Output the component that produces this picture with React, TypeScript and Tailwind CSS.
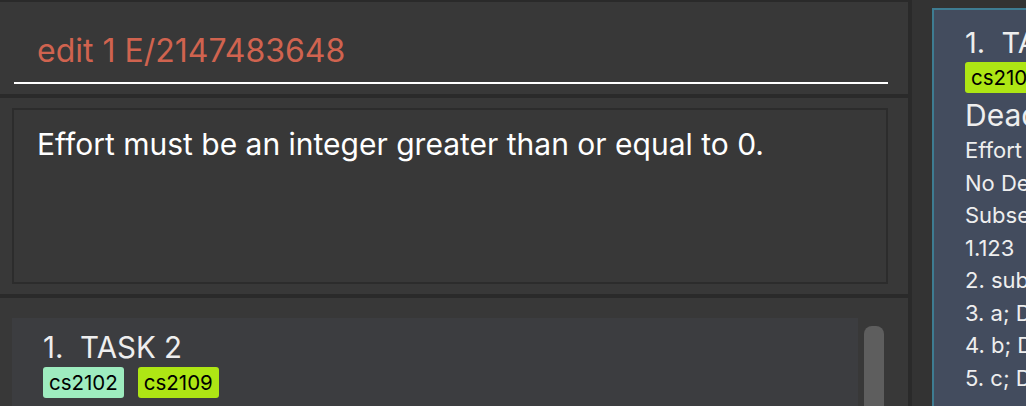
const font = { fontFamily: 'Inter, "Noto Sans", sans-serif' };

const Tag = ({ label, color }: { label: string; color: string }) => (
  <span className={`${color} text-black text-[20.5px] leading-[31px] px-[6px] rounded-[3px]`}>{label}</span>
);

const App = () => {
  const subtasks = ['1.123', '2. sub', '3. a; D', '4. b; D', '5. c; D'];

  return (
    <div className="w-[1026px] h-[406px] bg-[#2a2a2a] flex overflow-hidden" style={font}>
      {/* left column */}
      <div className="w-[908px] shrink-0 flex flex-col gap-[4px] pt-[2px]">
        <div className="h-[92px] bg-[#383838] pl-[14px] pr-[20px] flex flex-col justify-end pb-[10px]">
          <div className="text-[#d0634f] text-[32px] leading-[38px] pl-[23px] pb-[12px]">edit 1 E/2147483648</div>
          <div className="h-[2px] bg-white" />
        </div>
        <div className="h-[196px] bg-[#383838] p-[10px] pl-[12px] pr-[20px]">
          <div className="h-full border-2 border-[#2c2c2c] pl-[23px] pt-[14px] text-white text-[30px] leading-[40px]">
            Effort must be an integer greater than or equal to 0.
          </div>
        </div>
        <div className="flex-1 bg-[#383838] pl-[12px] pt-[20px] flex gap-[6px]">
          <div className="w-[846px] bg-[#3c3d40] pl-[31px] pt-[10px]">
            <div className="text-[#eeeeee] text-[29.5px] leading-[38px]">1.&nbsp; TASK 2</div>
            <div className="flex gap-[14px] mt-[1px]">
              <Tag label="cs2102" color="bg-[#9eecbf]" />
              <Tag label="cs2109" color="bg-[#aee614]" />
            </div>
          </div>
          <div className="w-[20px] mt-[8px] bg-[#5e5e5e] rounded-t-[8px]" />
        </div>
      </div>
      {/* right column */}
      <div className="flex-1 min-w-0 ml-[4px] bg-[#333333] pl-[20px] pt-[8px]">
        <div className="h-[420px] border-2 border-r-0 border-[#3e7c92] bg-[#434c5e] pl-[31px] pt-[16px] text-[#eeeeee] whitespace-nowrap overflow-hidden">
          <div className="text-[29px] leading-[34px]">1.&nbsp; TASK 2</div>
          <div className="mt-[2px] flex">
            <Tag label="cs2109" color="bg-[#aee614]" />
          </div>
          <div className="text-[30px] leading-[40px] mt-[2px]">Deadline</div>
          <div className="text-[22px] leading-[32.5px] -mt-[1px]">
            <div>Effort</div>
            <div>No Deadline</div>
            <div>Subsets</div>
            {subtasks.map((s) => (
              <div key={s}>{s}</div>
            ))}
          </div>
        </div>
      </div>
    </div>
  );
};

export default App;
